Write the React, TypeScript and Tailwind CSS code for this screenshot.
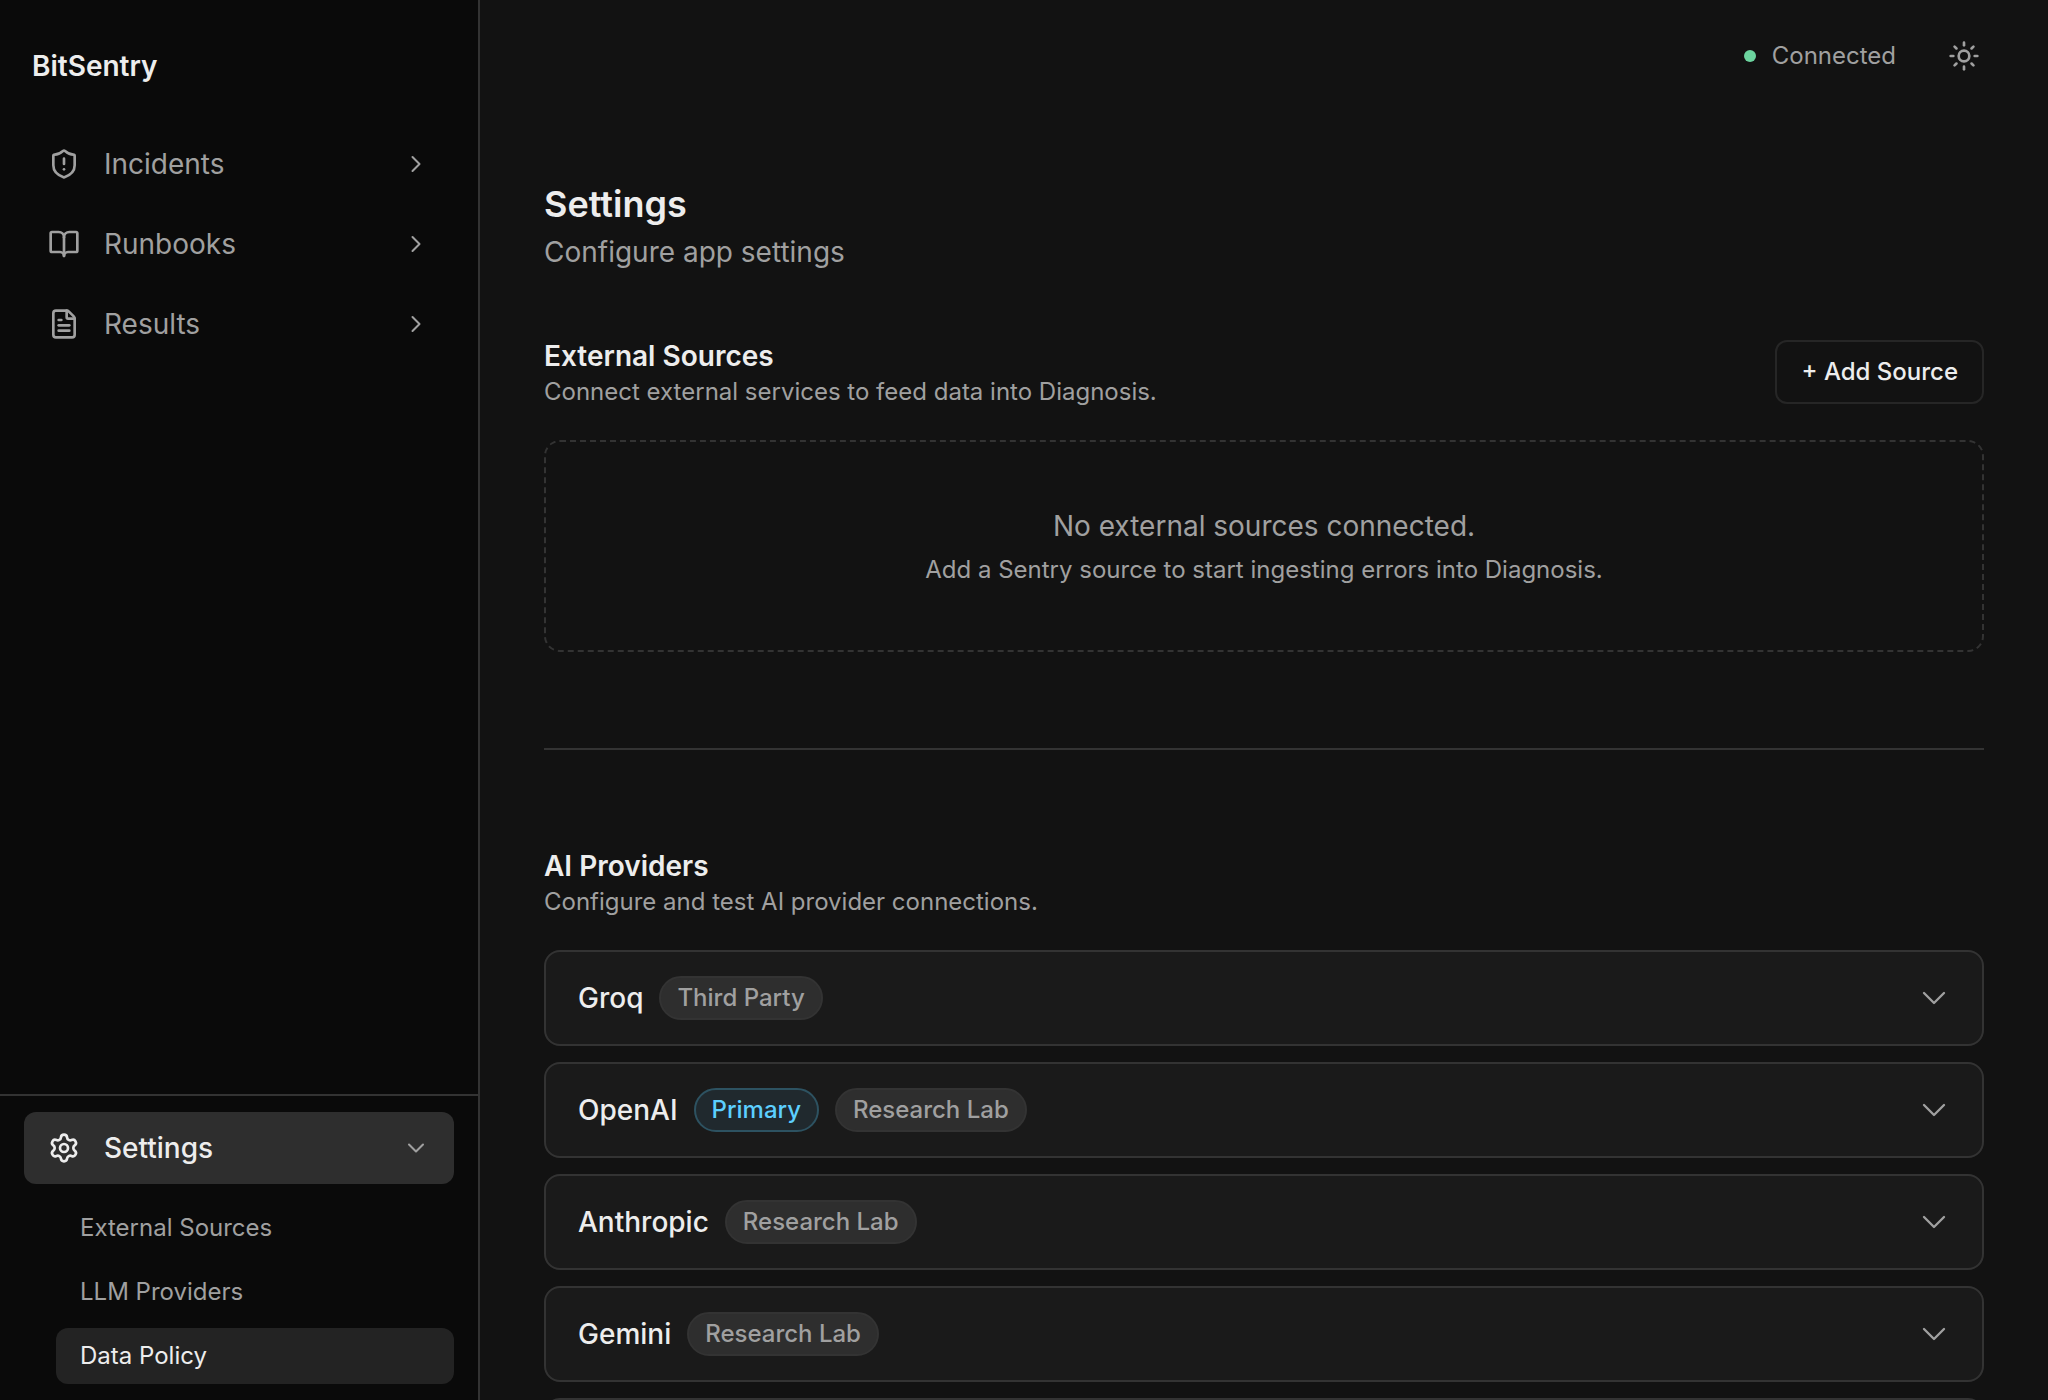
import {
  BookOpen,
  ChevronDown,
  ChevronRight,
  FileText,
  Settings,
  ShieldAlert,
  Sun,
  type LucideIcon,
} from 'lucide-react';
import { HiOutlineChevronDown } from 'react-icons/hi2';

interface NavEntry {
  label: string;
  icon: LucideIcon;
}

interface Provider {
  name: string;
  kind: string;
  primary?: boolean;
}

const navEntries: NavEntry[] = [
  { label: 'Incidents', icon: ShieldAlert },
  { label: 'Runbooks', icon: BookOpen },
  { label: 'Results', icon: FileText },
];

const settingsLinks = [
  { label: 'External Sources', active: false },
  { label: 'LLM Providers', active: false },
  { label: 'Data Policy', active: true },
];

const providers: Provider[] = [
  { name: 'Groq', kind: 'Third Party' },
  { name: 'OpenAI', kind: 'Research Lab', primary: true },
  { name: 'Anthropic', kind: 'Research Lab' },
  { name: 'Gemini', kind: 'Research Lab' },
];

function Sidebar() {
  return (
    <aside className="flex w-[480px] shrink-0 flex-col border-r-2 border-[#333333] bg-[#0a0a0a]">
      <div className="px-8 pt-12 pb-11 text-[28px] leading-9 font-semibold text-[#ededed]">BitSentry</div>

      <nav className="flex flex-1 flex-col gap-2 px-6">
        {navEntries.map(({ label, icon: Icon }) => (
          <button
            key={label}
            type="button"
            className="flex h-18 items-center gap-6 rounded-xl px-6 text-[28px] text-[#a0a0a0]"
          >
            <Icon size={32} />
            <span className="flex-1 text-left">{label}</span>
            <ChevronRight size={28} strokeWidth={1.75} />
          </button>
        ))}
      </nav>

      <div className="border-t-2 border-[#333333] px-6 py-4">
        <button
          type="button"
          aria-expanded="true"
          className="flex h-18 w-full items-center gap-6 rounded-xl bg-[#2e2e2e] px-6 text-[28px] font-medium text-[#ededed]"
        >
          <Settings size={32} />
          <span className="flex-1 text-left">Settings</span>
          <ChevronDown size={28} strokeWidth={1.75} className="text-[#a0a0a0]" />
        </button>
        <div className="mt-4 flex flex-col gap-2 pl-8">
          {settingsLinks.map(({ label, active }) => (
            <a
              key={label}
              href="#"
              className={`flex h-14 items-center rounded-xl px-6 text-[24px] ${
                active ? 'bg-[#232323] text-[#ededed]' : 'text-[#a0a0a0]'
              }`}
            >
              {label}
            </a>
          ))}
        </div>
      </div>
    </aside>
  );
}

function ProviderCard({ name, kind, primary }: Provider) {
  return (
    <button
      type="button"
      className="flex h-24 w-full shrink-0 items-center gap-4 rounded-2xl border-2 border-[#333333] bg-[#1a1a1a] px-8"
    >
      <span className="text-[28px] font-medium text-[#ededed]">{name}</span>
      {primary && (
        <span className="flex h-11 items-center rounded-full border-2 border-[#2d5261] bg-[#20292e] px-4 text-[24px] font-medium text-[#5ccfff]">
          Primary
        </span>
      )}
      <span className="flex h-11 items-center rounded-full border-2 border-[#333333] bg-[#2e2e2e] px-4 text-[24px] font-medium text-[#a0a0a0]">
        {kind}
      </span>
      <HiOutlineChevronDown size={32} strokeWidth={1.75} className="ml-auto text-[#a0a0a0]" />
    </button>
  );
}

export default function App() {
  return (
    <div className="flex h-screen overflow-hidden bg-[#121212] font-['Inter',sans-serif]">
      <Sidebar />

      <div className="flex min-w-0 flex-1 flex-col">
        <header className="flex h-28 shrink-0 items-center justify-end gap-8 px-12">
          <div className="flex items-center gap-4 text-[24px] text-[#a0a0a0]">
            <span className="size-3 rounded-full bg-[#6cd49f]" />
            Connected
          </div>
          <button
            type="button"
            aria-label="Toggle theme"
            className="flex size-18 items-center justify-center rounded-xl text-[#a0a0a0]"
          >
            <Sun size={32} />
          </button>
        </header>

        <main className="flex min-h-0 flex-1 flex-col overflow-hidden px-16 pt-16">
          <h1 className="text-[36px] leading-14 font-semibold text-[#ededed]">Settings</h1>
          <p className="text-[28px] leading-10 text-[#a0a0a0]">Configure app settings</p>

          <section className="mt-16">
            <div className="flex items-center justify-between">
              <div>
                <h2 className="text-[28px] leading-10 font-semibold text-[#ededed]">External Sources</h2>
                <p className="text-[24px] leading-8 text-[#a0a0a0]">
                  Connect external services to feed data into Diagnosis.
                </p>
              </div>
              <button
                type="button"
                className="h-16 rounded-xl border-2 border-[#262626] px-6 text-[24px] font-medium text-[#ededed]"
              >
                + Add Source
              </button>
            </div>

            <div className="mt-8 rounded-2xl border-2 border-dashed border-[#333333] py-16 text-center text-[#a0a0a0]">
              <p className="text-[28px] leading-10">No external sources connected.</p>
              <p className="mt-2 text-[24px] leading-8">
                Add a Sentry source to start ingesting errors into Diagnosis.
              </p>
            </div>
          </section>

          <hr className="my-24 border-t-2 border-[#333333]" />

          <section>
            <h2 className="text-[28px] leading-10 font-semibold text-[#ededed]">AI Providers</h2>
            <p className="text-[24px] leading-8 text-[#a0a0a0]">Configure and test AI provider connections.</p>

            <div className="mt-8 flex flex-col gap-4">
              {providers.map((provider) => (
                <ProviderCard key={provider.name} {...provider} />
              ))}
              <div className="h-24 rounded-2xl border-2 border-[#333333] bg-[#1a1a1a]" />
            </div>
          </section>
        </main>
      </div>
    </div>
  );
}
